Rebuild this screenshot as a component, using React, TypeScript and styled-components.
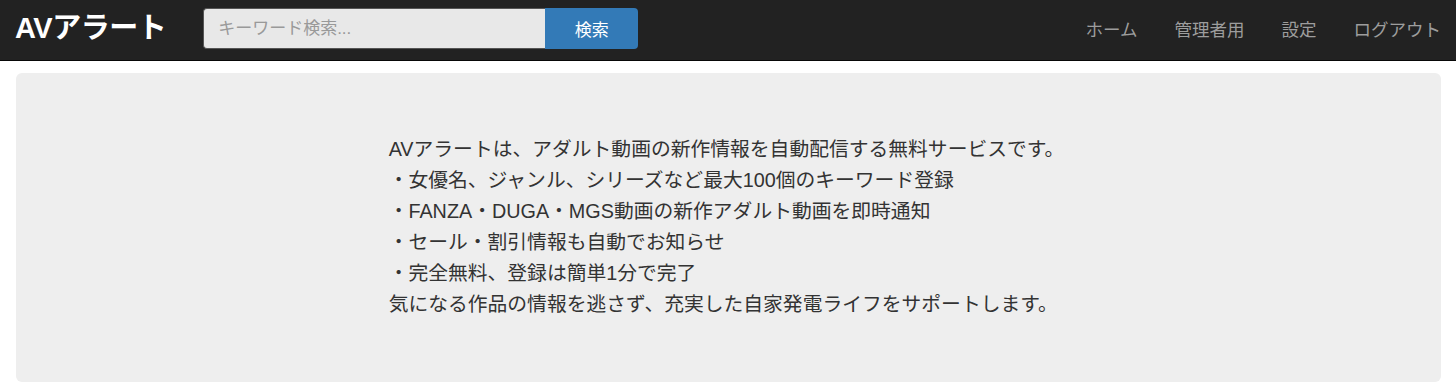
import React from "react";
import styled, { createGlobalStyle } from "styled-components";

const Global = createGlobalStyle`
  html, body { margin: 0; padding: 0; background: #fff; }
  body {
    font-family: "Liberation Sans", Arial, "Noto Sans CJK JP", sans-serif;
    color: #333;
  }
  * { box-sizing: border-box; }
`;

const Navbar = styled.nav`
  height: 61px;
  background: #222;
  border-bottom: 1px solid #080808;
  display: flex;
  align-items: flex-start;
  padding: 8px 15px 0 15px;
`;

const Brand = styled.a`
  color: #fff;
  font-weight: bold;
  font-size: 29px;
  letter-spacing: -0.5px;
  text-decoration: none;
  margin-right: 37px;
  line-height: 41px;
  height: 41px;
`;

const SearchForm = styled.form`
  display: flex;
  height: 41px;
  margin: 0;
`;

const SearchInput = styled.input`
  width: 342px;
  height: 41px;
  background: #e8e8e8;
  border: 1px solid #555;
  border-right: none;
  border-radius: 4px 0 0 4px;
  padding: 0 14px;
  font-family: inherit;
  font-size: 17px;
  color: #333;
  outline: none;
  &::placeholder { color: #999; }
`;

const SearchButton = styled.button`
  width: 93px;
  height: 41px;
  background: #337ab7;
  color: #fff;
  border: none;
  border-radius: 0 4px 4px 0;
  font-family: inherit;
  font-size: 17px;
  cursor: pointer;
`;

const NavLinks = styled.ul`
  list-style: none;
  display: flex;
  margin: 0 0 0 auto;
  padding: 0;
  height: 41px;
  align-items: center;
`;

const NavItem = styled.li`
  margin-left: 37px;
  &:first-child { margin-left: 0; }
`;

const NavLink = styled.a`
  color: #9d9d9d;
  font-size: 17.5px;
  text-decoration: none;
`;

const Main = styled.main`
  padding: 12px 15px 0 16px;
`;

const Jumbotron = styled.section`
  background: #eee;
  border-radius: 6px;
  height: 309px;
  display: flex;
  align-items: center;
  justify-content: center;
`;

const Intro = styled.div`
  font-size: 19.8px;
  line-height: 31px;
  color: #333;
  margin-right: 4px;
  margin-top: -2px;
`;

const Line = styled.div``;

export default function App() {
  return (
    <>
      <Global />
      <Navbar>
        <Brand href="#">AVアラート</Brand>
        <SearchForm onSubmit={(e) => e.preventDefault()}>
          <SearchInput placeholder="キーワード検索..." />
          <SearchButton type="submit">検索</SearchButton>
        </SearchForm>
        <NavLinks>
          <NavItem><NavLink href="#">ホーム</NavLink></NavItem>
          <NavItem><NavLink href="#">管理者用</NavLink></NavItem>
          <NavItem><NavLink href="#">設定</NavLink></NavItem>
          <NavItem><NavLink href="#">ログアウト</NavLink></NavItem>
        </NavLinks>
      </Navbar>
      <Main>
        <Jumbotron>
          <Intro>
            <Line>AVアラートは、アダルト動画の新作情報を自動配信する無料サービスです。</Line>
            <Line>・女優名、ジャンル、シリーズなど最大100個のキーワード登録</Line>
            <Line>・FANZA・DUGA・MGS動画の新作アダルト動画を即時通知</Line>
            <Line>・セール・割引情報も自動でお知らせ</Line>
            <Line>・完全無料、登録は簡単1分で完了</Line>
            <Line>気になる作品の情報を逃さず、充実した自家発電ライフをサポートします。</Line>
          </Intro>
        </Jumbotron>
      </Main>
    </>
  );
}
